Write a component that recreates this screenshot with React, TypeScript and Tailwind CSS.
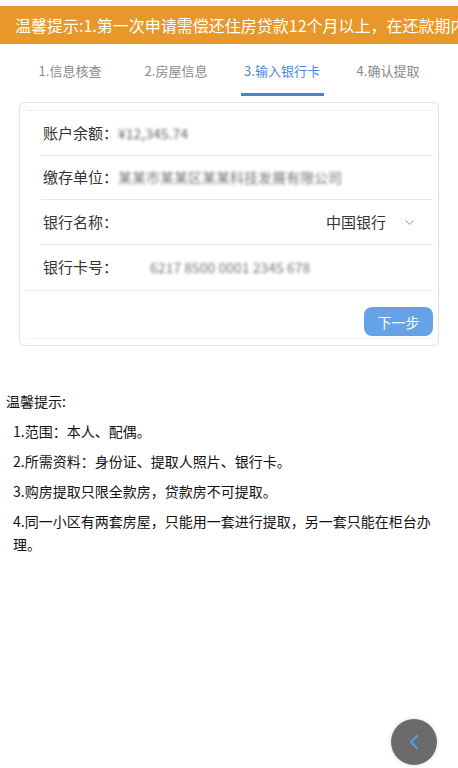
import { ChevronDown, ChevronLeft } from 'lucide-react';

const TABS = ['1.信息核查', '2.房屋信息', '3.输入银行卡', '4.确认提取'];

const TIPS = [
  '1.范围：本人、配偶。',
  '2.所需资料：身份证、提取人照片、银行卡。',
  '3.购房提取只限全款房，贷款房不可提取。',
  '4.同一小区有两套房屋，只能用一套进行提取，另一套只能在柜台办理。',
];

const App = () => {
  return (
    <div
      className="min-h-screen bg-white pt-[6px] text-[#333]"
      style={{ fontFamily: '"Noto Sans CJK SC", "Noto Sans", sans-serif' }}
    >
      {/* notice banner, runs off the right edge like a marquee */}
      <div className="h-[38px] bg-[#e8972b] flex items-center pl-[15px] overflow-hidden whitespace-nowrap">
        <span className="text-[16px] text-white leading-none">
          温馨提示:1.第一次申请需偿还住房贷款12个月以上，在还款期内
        </span>
      </div>

      {/* steps */}
      <div className="grid grid-cols-4 mx-[17px]">
        {TABS.map((t, i) => (
          <div key={t} className="flex flex-col items-center pt-[18px]">
            <span className={`text-[13px] leading-[18px] ${i === 2 ? 'text-[#4f86d4]' : 'text-[#8a8a8a]'}`}>{t}</span>
            <div className={`mt-[13px] h-[3px] w-[83px] ${i === 2 ? 'bg-[#4d80d0]' : 'bg-transparent'}`} />
          </div>
        ))}
      </div>

      {/* form card */}
      <div className="mx-[19px] mt-[6px] border border-[#e3e3e3] rounded-[6px] pt-[7px] pb-[6px] shadow-[0_0_3px_rgba(0,0,0,0.04)]">
        <div className="ml-[6px] mr-[5px] border-t border-b border-[#eeeeee]">
          <div className="pl-[15px]">
            <div className="h-[45px] flex items-center border-b border-[#e8e8e8] pl-[2px] text-[15px]">
              <span>账户余额：</span>
              <span className="text-[#666] blur-[1.4px] text-[14px]">¥12,345.74</span>
            </div>
            <div className="h-[44px] flex items-center border-b border-[#e8e8e8] pl-[2px] text-[15px]">
              <span>缴存单位：</span>
              <span className="text-[#777] blur-[1.4px] text-[14px]">某某市某某区某某科技发展有限公司</span>
            </div>
            <div className="h-[45px] flex items-center border-b border-[#e8e8e8] pl-[2px] text-[15px]">
              <span>银行名称：</span>
              <span className="ml-auto">中国银行</span>
              <ChevronDown size={15} strokeWidth={1.5} className="ml-[16px] mr-[16px] text-[#888]" />
            </div>
            <div className="h-[45px] flex items-center pl-[2px] text-[15px]">
              <span>银行卡号：</span>
              <span className="ml-[32px] text-[#777] blur-[1.4px] text-[14px]">6217 8500 0001 2345 678</span>
            </div>
          </div>
        </div>
        <div className="ml-[6px] mr-[5px] flex justify-end pt-[16px] pb-[2px] border-b border-[#f0f0f0]">
          <button className="w-[69px] h-[29px] rounded-[8px] bg-[#66a3e6] text-white text-[14px] leading-none">
            下一步
          </button>
        </div>
      </div>

      {/* tips */}
      <div className="mt-[44px] pl-[6px] pr-[18px] text-[14px] leading-[23px] text-[#111]">
        <div>温馨提示:</div>
        {TIPS.map((t) => (
          <div key={t} className="mt-[7px] pl-[7px]">{t}</div>
        ))}
      </div>

      {/* back button */}
      <button className="fixed right-[21px] bottom-[3px] w-[46px] h-[46px] rounded-full bg-[#6b6b6b] flex items-center justify-center shadow-[0_0_4px_rgba(0,0,0,0.15)]">
        <ChevronLeft size={24} strokeWidth={2} className="text-[#5c9de8]" />
      </button>
    </div>
  );
};

export default App;
